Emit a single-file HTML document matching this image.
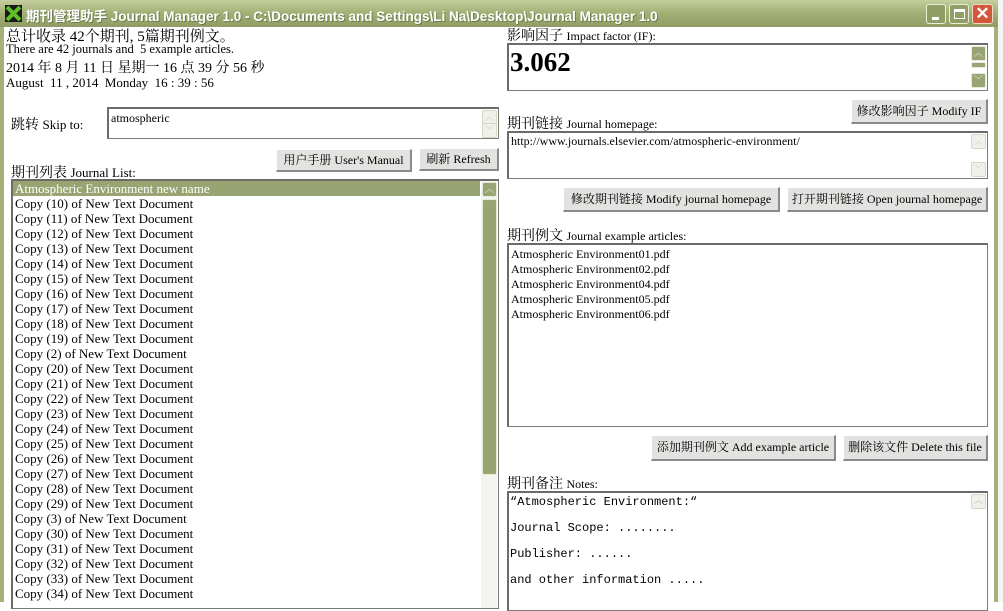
<!DOCTYPE html>
<html><head><meta charset="utf-8"><style>
*{margin:0;padding:0;box-sizing:border-box}
body{width:1003px;height:602px;overflow:hidden;background:#fff;position:relative;font-family:"Liberation Serif","Noto Serif CJK SC","Noto Sans CJK SC",serif;color:#000}
.a{position:absolute;white-space:nowrap}
.title{left:0;top:0;width:998px;height:27px;background:linear-gradient(#c5cf9e,#a4b177 45%,#8f9c63);}
.title span{font-family:"Liberation Sans","Noto Sans CJK SC",sans-serif;font-weight:bold;color:#fff;font-size:13.5px;position:absolute;left:26px;top:5px;text-shadow:1px 1px 0 #6f7a4a}
.frame{background:#a4b177}
.box{position:absolute;background:#fff;border:1px solid #7a7a7a;border-top:2px solid #6b6b6b;border-left:2px solid #6b6b6b;overflow:hidden}
.btn{position:absolute;background:#e2e2e0;border:1px solid #fff;border-right:2px solid #8a8a8a;border-bottom:2px solid #8a8a8a;font-size:12px;text-align:center;line-height:20px;white-space:nowrap}
.sb{position:absolute;width:16px;background:#f3f4ee}
.arr{position:absolute;width:15px;height:15px;border:1px solid #d4d8c6;border-radius:2px;background:#f0f1ea;color:#c4c8b4;font-size:9px;text-align:center;line-height:13px}
.garr{background:#98a472;border-color:#e6ead8;color:#fff}
.li{font-size:13px;line-height:15px;padding-left:2px}
.t14{font-size:15px}.t12{font-size:12.5px}
</style></head><body>
<div class="a title"><div style="position:absolute;left:5px;top:5px;width:17px;height:17px;background:#1a1a1a"><svg width="17" height="17"><path d="M2 2L15 15M15 2L2 15" stroke="#5fc02a" stroke-width="4"/></svg></div><span>期刊管理助手 Journal Manager 1.0 - C:\Documents and Settings\Li Na\Desktop\Journal Manager 1.0</span>
<div style="position:absolute;left:926px;top:4px;width:20px;height:20px;border:1px solid #e8edd8;border-radius:3px;background:#919e66"><div style="position:absolute;left:5px;top:12px;width:7px;height:3px;background:#fff"></div></div>
<div style="position:absolute;left:949px;top:4px;width:20px;height:20px;border:1px solid #e8edd8;border-radius:3px;background:#919e66"><div style="position:absolute;left:4px;top:4px;width:11px;height:10px;border:1px solid #fff;border-top:3px solid #fff"></div></div>
<div style="position:absolute;left:972px;top:4px;width:21px;height:20px;border:1px solid #f0d8c8;border-radius:3px;background:#d2583a;color:#fff;font:bold 17px 'Liberation Sans';text-align:center;line-height:18px">✕</div>
</div>
<div class="a frame" style="left:0;top:27px;width:4px;height:575px"></div>
<div class="a frame" style="left:994px;top:27px;width:4px;height:575px"></div>
<div class="a" style="left:998px;top:0;width:5px;height:602px;background:#f4f4f2"></div>

<div class="a t14" style="left:6px;top:25px">总计收录 42个期刊, 5篇期刊例文。</div>
<div class="a t12" style="left:6px;top:42px">There are 42 journals and&nbsp; 5 example articles.</div>
<div class="a" style="left:6px;top:57px;font-size:14px">2014 年 8 月 11 日 星期一 16 点 39 分 56 秒</div>
<div class="a" style="left:6px;top:75px;font-size:13px">August&nbsp; 11 , 2014&nbsp; Monday&nbsp; 16 : 39 : 56</div>

<div class="a" style="left:11px;top:114px;font-size:14px">跳转 <span style="font-size:13px">Skip to:</span></div>
<div class="box" style="left:107px;top:107px;width:392px;height:32px"><div class="li" style="padding-top:2px;font-size:12px">atmospheric</div>
<div class="arr" style="right:1px;top:1px">︿</div><div class="arr" style="right:1px;top:14px">﹀</div></div>
<div class="btn" style="left:276px;top:149px;width:136px;height:23px">用户手册 User's Manual</div>
<div class="btn" style="left:419px;top:148px;width:80px;height:23px">刷新 Refresh</div>
<div class="a" style="left:11px;top:162px;font-size:14px">期刊列表 <span style="font-size:13px">Journal List:</span></div>
<div class="box" style="left:11px;top:179px;width:488px;height:430px;padding-top:0">
<div class="li" style="background:#98a472;color:#fff;width:467px">Atmospheric Environment new name</div>
<div class="li">Copy (10) of New Text Document</div><div class="li">Copy (11) of New Text Document</div><div class="li">Copy (12) of New Text Document</div><div class="li">Copy (13) of New Text Document</div><div class="li">Copy (14) of New Text Document</div><div class="li">Copy (15) of New Text Document</div><div class="li">Copy (16) of New Text Document</div><div class="li">Copy (17) of New Text Document</div><div class="li">Copy (18) of New Text Document</div><div class="li">Copy (19) of New Text Document</div><div class="li">Copy (2) of New Text Document</div><div class="li">Copy (20) of New Text Document</div><div class="li">Copy (21) of New Text Document</div><div class="li">Copy (22) of New Text Document</div><div class="li">Copy (23) of New Text Document</div><div class="li">Copy (24) of New Text Document</div><div class="li">Copy (25) of New Text Document</div><div class="li">Copy (26) of New Text Document</div><div class="li">Copy (27) of New Text Document</div><div class="li">Copy (28) of New Text Document</div><div class="li">Copy (29) of New Text Document</div><div class="li">Copy (3) of New Text Document</div><div class="li">Copy (30) of New Text Document</div><div class="li">Copy (31) of New Text Document</div><div class="li">Copy (32) of New Text Document</div><div class="li">Copy (33) of New Text Document</div><div class="li">Copy (34) of New Text Document</div>
<div class="sb" style="left:468px;top:0;height:430px"></div>
<div class="arr garr" style="left:469px;top:1px">︿</div>
<div style="position:absolute;left:469px;top:18px;width:15px;height:276px;background:#98a472;border:1px solid #e6ead8;border-radius:2px"></div>
</div>

<div class="a" style="left:507px;top:25px;font-size:14px">影响因子 <span style="font-size:12px">Impact factor (IF):</span></div>
<div class="box" style="left:507px;top:43px;width:481px;height:48px">
<div class="a" style="left:1px;top:2px;font:bold 27px 'Liberation Serif',serif">3.062</div>
<div class="arr garr" style="right:1px;top:1px">︿</div>
<div style="position:absolute;right:1px;top:17px;width:15px;height:6px;background:#98a472;border:1px solid #e6ead8;border-radius:2px"></div>
<div class="arr garr" style="right:1px;top:28px">﹀</div></div>
<div class="btn" style="left:851px;top:99px;width:137px;height:25px;line-height:22px">修改影响因子 Modify IF</div>
<div class="a" style="left:507px;top:113px;font-size:14px">期刊链接 <span style="font-size:12px">Journal homepage:</span></div>
<div class="box" style="left:507px;top:131px;width:481px;height:48px"><div class="li" style="padding-top:1px;font-size:12px">http://www.journals.elsevier.com/atmospheric-environment/</div>
<div class="arr" style="right:1px;top:1px">︿</div><div class="arr" style="right:1px;top:29px">﹀</div></div>
<div class="btn" style="left:563px;top:187px;width:217px;height:25px;line-height:22px">修改期刊链接 Modify journal homepage</div>
<div class="btn" style="left:787px;top:187px;width:201px;height:25px;line-height:22px">打开期刊链接 Open journal homepage</div>
<div class="a" style="left:507px;top:225px;font-size:14px">期刊例文 <span style="font-size:12px">Journal example articles:</span></div>
<div class="box" style="left:507px;top:243px;width:481px;height:184px;padding-top:2px">
<div class="li" style="font-size:12px">Atmospheric Environment01.pdf</div><div class="li" style="font-size:12px">Atmospheric Environment02.pdf</div><div class="li" style="font-size:12px">Atmospheric Environment04.pdf</div><div class="li" style="font-size:12px">Atmospheric Environment05.pdf</div><div class="li" style="font-size:12px">Atmospheric Environment06.pdf</div></div>
<div class="btn" style="left:651px;top:435px;width:185px;height:26px;line-height:23px">添加期刊例文 Add example article</div>
<div class="btn" style="left:843px;top:435px;width:145px;height:26px;line-height:23px">删除该文件 Delete this file</div>
<div class="a" style="left:507px;top:473px;font-size:14px">期刊备注 <span style="font-size:12px">Notes:</span></div>
<div class="box" style="left:507px;top:491px;width:481px;height:120px;font:12px/26px 'Liberation Mono',monospace;padding:0 0 0 1px">
<div style="margin-top:-4px">“Atmospheric Environment:“</div><div>Journal Scope: ........</div><div>Publisher: ......</div><div>and other information .....</div>
<div class="arr" style="right:1px;top:1px">︿</div></div>
</body></html>
